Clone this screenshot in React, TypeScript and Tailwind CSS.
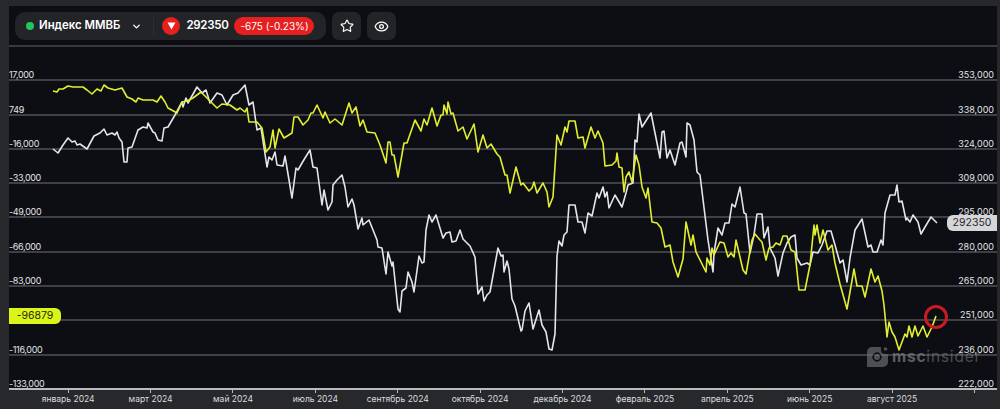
import { ChevronDown, Eye, Star } from 'lucide-react';

const leftLabels = ['17,000', '749', '-16,000', '-33,000', '-49,000', '-66,000', '-83,000', '', '-116,000', '-133,000'];
const rightLabels = ['353,000', '338,000', '324,000', '309,000', '295,000', '280,000', '265,000', '251,000', '236,000', '222,000'];
const months = [
  'январь 2024', 'март 2024', 'май 2024', 'июль 2024', 'сентябрь 2024', 'октябрь 2024',
  'декабрь 2024', 'февраль 2025', 'апрель 2025', 'июнь 2025', 'август 2025', '',
];

const yellowLine =
  '53,91 57,92 59,89 63,89 68,86 73,87 78,87 83,87 87,90 92,94 97,89 101,91 104,85 108,88 115,90 122,88 127,97 132,99 136,102 138,98 143,100 153,100 157,102 161,96 165,102 168,108 177,113 182,102 187,101 193,98 201,92 207,98 217,108 222,104 230,105 237,110 240,108 245,112 247,108 249,122 257,122 262,128 266,152 270,147 273,130 275,148 279,129 284,138 292,133 294,117 298,117 303,125 308,120 311,113 313,113 317,105 323,118 325,112 330,123 335,119 342,125 349,103 352,113 356,107 360,126 363,120 367,132 375,133 380,145 386,163 388,142 390,142 392,155 394,155 398,177 404,143 407,143 415,120 421,131 424,119 427,125 432,108 437,126 441,115 443,115 444,105 447,114 448,102 451,114 453,113 458,131 463,127 467,139 474,124 478,152 483,135 487,148 491,144 497,154 500,157 505,175 507,175 510,193 516,167 521,185 523,183 529,191 532,188 534,182 537,193 543,183 547,192 549,207 553,197 557,135 561,145 565,127 567,132 569,121 575,121 578,138 583,137 585,148 591,127 595,138 598,131 603,143 605,166 612,165 616,161 617,153 619,167 622,168 624,192 626,177 629,172 632,182 636,155 639,165 642,187 646,198 648,188 652,222 657,223 661,228 665,247 670,245 673,262 678,277 683,259 686,222 691,245 693,235 696,252 700,260 706,272 707,258 710,265 712,248 714,255 720,242 724,243 728,257 731,253 734,257 736,240 743,270 746,274 752,240 755,234 760,240 762,242 766,260 769,248 773,247 776,243 780,245 783,236 787,236 791,250 795,252 799,290 805,290 810,265 814,225 815,235 817,225 820,243 823,230 828,250 832,245 835,263 840,284 847,309 854,269 857,286 862,286 865,297 871,269 875,282 878,276 882,291 884,305 887,337 889,322 892,332 895,337 899,350 905,334 907,337 909,326 912,337 915,326 918,336 923,326 927,337 932,327 936,316';

const whiteLine =
  '53,149 58,153 63,145 68,138 72,142 75,141 77,145 80,144 87,149 94,136 100,133 104,129 107,135 112,133 115,135 117,132 119,138 122,142 124,162 127,162 128,148 132,147 138,130 143,127 147,128 148,123 153,132 155,133 158,140 162,141 164,128 168,127 175,115 182,102 183,107 186,98 188,103 197,87 202,93 206,90 210,103 217,93 222,95 227,105 233,95 238,93 245,85 249,105 253,102 257,130 261,128 267,167 269,157 272,160 275,152 277,165 283,166 285,156 292,198 296,168 298,170 302,163 305,158 310,150 313,167 317,168 322,205 324,190 328,210 332,202 333,185 337,180 342,175 345,187 348,207 352,199 354,205 358,229 362,218 363,225 369,220 373,230 377,240 378,247 382,248 386,274 388,252 392,266 393,262 398,309 400,312 402,291 406,288 408,272 412,282 414,292 419,256 422,263 424,262 426,230 429,215 432,222 436,215 443,238 446,233 450,232 452,242 456,241 460,230 463,239 470,246 475,257 478,294 482,287 484,301 487,295 490,292 498,248 501,256 503,255 504,272 507,261 509,269 512,299 515,306 521,331 522,330 525,311 529,303 533,329 539,310 542,325 546,332 549,349 552,350 555,334 557,256 559,241 562,246 564,235 567,232 569,205 575,205 578,222 582,222 585,233 588,213 592,216 597,193 599,198 603,187 605,197 607,192 609,208 615,195 622,207 626,193 628,185 633,183 635,140 637,142 639,114 642,127 651,113 660,158 662,132 664,131 667,158 670,150 675,165 680,143 682,142 686,157 687,123 690,125 694,140 697,172 700,175 708,240 713,272 714,253 718,228 722,235 725,223 729,223 732,204 735,207 740,187 744,213 746,214 750,253 754,235 757,214 762,214 764,238 768,227 770,248 775,258 778,276 783,253 787,243 791,237 795,235 797,258 801,265 807,263 810,265 813,252 818,253 822,245 827,231 831,231 835,245 840,263 843,260 847,282 850,258 855,230 862,219 868,247 871,245 873,252 877,252 881,240 883,245 885,213 890,195 895,195 897,185 899,202 902,201 906,220 907,218 910,222 913,215 918,222 921,234 925,227 931,217 937,223';

function App() {
  return (
    <div className="relative h-[409px] w-[1000px] overflow-hidden bg-[#27282c] pl-[9px] pr-[3px] pt-[6px] font-['Inter',sans-serif]">
      <div className="bg-[#0d0e13]">
        <div className="flex h-[41px] items-start gap-[6px] border-b-2 border-[#38393e] pl-[6px] pt-[6px]">
          <div className="flex h-[28px] w-[311px] items-center rounded-[10px] bg-[#232428] pl-[11px]">
            <span className="h-[8px] w-[8px] rounded-full bg-[#22c55e]" />
            <span className="ml-[5px] text-[11.4px] font-semibold text-white">Индекс ММВБ</span>
            <ChevronDown size={11} strokeWidth={3} className="ml-[11px] text-white" />
            <span className="ml-[11px] h-[18px] w-px bg-[#2d2e33]" />
            <span className="ml-[8px] flex h-[18px] w-[18px] items-center justify-center rounded-full bg-[#e5201f]">
              <svg width="9" height="8" viewBox="0 0 9 8">
                <path d="M0.5 0.5h8L4.5 7.5z" fill="#fff" />
              </svg>
            </span>
            <span className="ml-[6px] text-[11.5px] font-semibold tracking-[-0.3px] text-white">292350</span>
            <span className="ml-[6px] flex h-[18px] w-[80px] items-center justify-center rounded-[9px] bg-[#e5201f] text-[10px] text-white">
              -675 (-0.23%)
            </span>
          </div>
          <div className="flex h-[28px] w-[29px] items-center justify-center rounded-[7px] bg-[#232428]">
            <Star size={14} strokeWidth={2} className="text-white" />
          </div>
          <div className="flex h-[28px] w-[29px] items-center justify-center rounded-[7px] bg-[#232428]">
            <Eye size={15} strokeWidth={2} className="text-white" />
          </div>
        </div>
        <div className="flex flex-col">
          {leftLabels.map((label, i) => (
            <div
              key={rightLabels[i]}
              className={
                i === 9
                  ? 'flex h-[34.3px] items-end justify-between border-b-2 border-[#b9babc] pr-[3px] text-[9px] leading-[9px] text-[#e4e4e6]'
                  : 'flex h-[34.3px] items-end justify-between border-b-2 border-[#3f4045] pr-[3px] text-[9px] leading-[9px] text-[#e4e4e6]'
              }
            >
              <span className="tracking-[-0.35px]">{label}</span>
              <span>{rightLabels[i]}</span>
            </div>
          ))}
        </div>
      </div>
      <div className="grid grid-cols-[repeat(12,82.4px)] pl-[18px]">
        {months.map((m, i) => (
          <div key={i} className="flex flex-col items-center">
            <span className="h-[3px] w-px bg-[#b9babc]" />
            <span className="whitespace-nowrap text-[8.5px] leading-[12px] text-[#dcdcde]">{m}</span>
          </div>
        ))}
      </div>

      <svg className="absolute left-0 top-0" width="1000" height="409" viewBox="0 0 1000 409" fill="none">
        <polyline points={whiteLine} stroke="#e4e5ea" strokeWidth="1.6" strokeLinejoin="round" />
        <polyline points={yellowLine} stroke="#e2ee30" strokeWidth="1.6" strokeLinejoin="round" />
        <circle cx="936" cy="317" r="10.5" stroke="#cc1a22" strokeWidth="3" />
        <g opacity="0.62">
          <path
            d="M872 347h9a8 8 0 0 0 0 3 4 4 0 0 0 4 4 4 4 0 0 0 3 0v8a5 5 0 0 1-5 5h-16v-15a5 5 0 0 1 5-5z"
            fill="#77787c"
          />
          <circle cx="877" cy="357" r="4.2" fill="#0d0e13" stroke="#0d0e13" />
          <circle cx="877" cy="357" r="3" fill="#77787c" />
          <circle cx="885.5" cy="349" r="1.8" fill="#77787c" />
        </g>
      </svg>

      <div className="absolute left-[9px] top-[308px] flex h-[16px] w-[52px] items-center justify-center rounded-r-[6px] bg-[#dcf518] text-[10.5px] leading-none text-[#26280c]">
        -96879
      </div>
      <div className="absolute left-[947px] top-[215px] flex h-[16px] w-[50px] items-center justify-center rounded-l-[6px] bg-[#d5d6d8] text-[10.5px] leading-none text-[#26272b]">
        292350
      </div>
      <div className="absolute left-[892px] top-[347px] whitespace-nowrap text-[15.5px] leading-[20px] tracking-[0.8px] text-[#77787c] opacity-75">
        <span className="font-bold">msc</span>
        <span className="font-normal opacity-80">insider</span>
      </div>
    </div>
  );
}

export default App;
